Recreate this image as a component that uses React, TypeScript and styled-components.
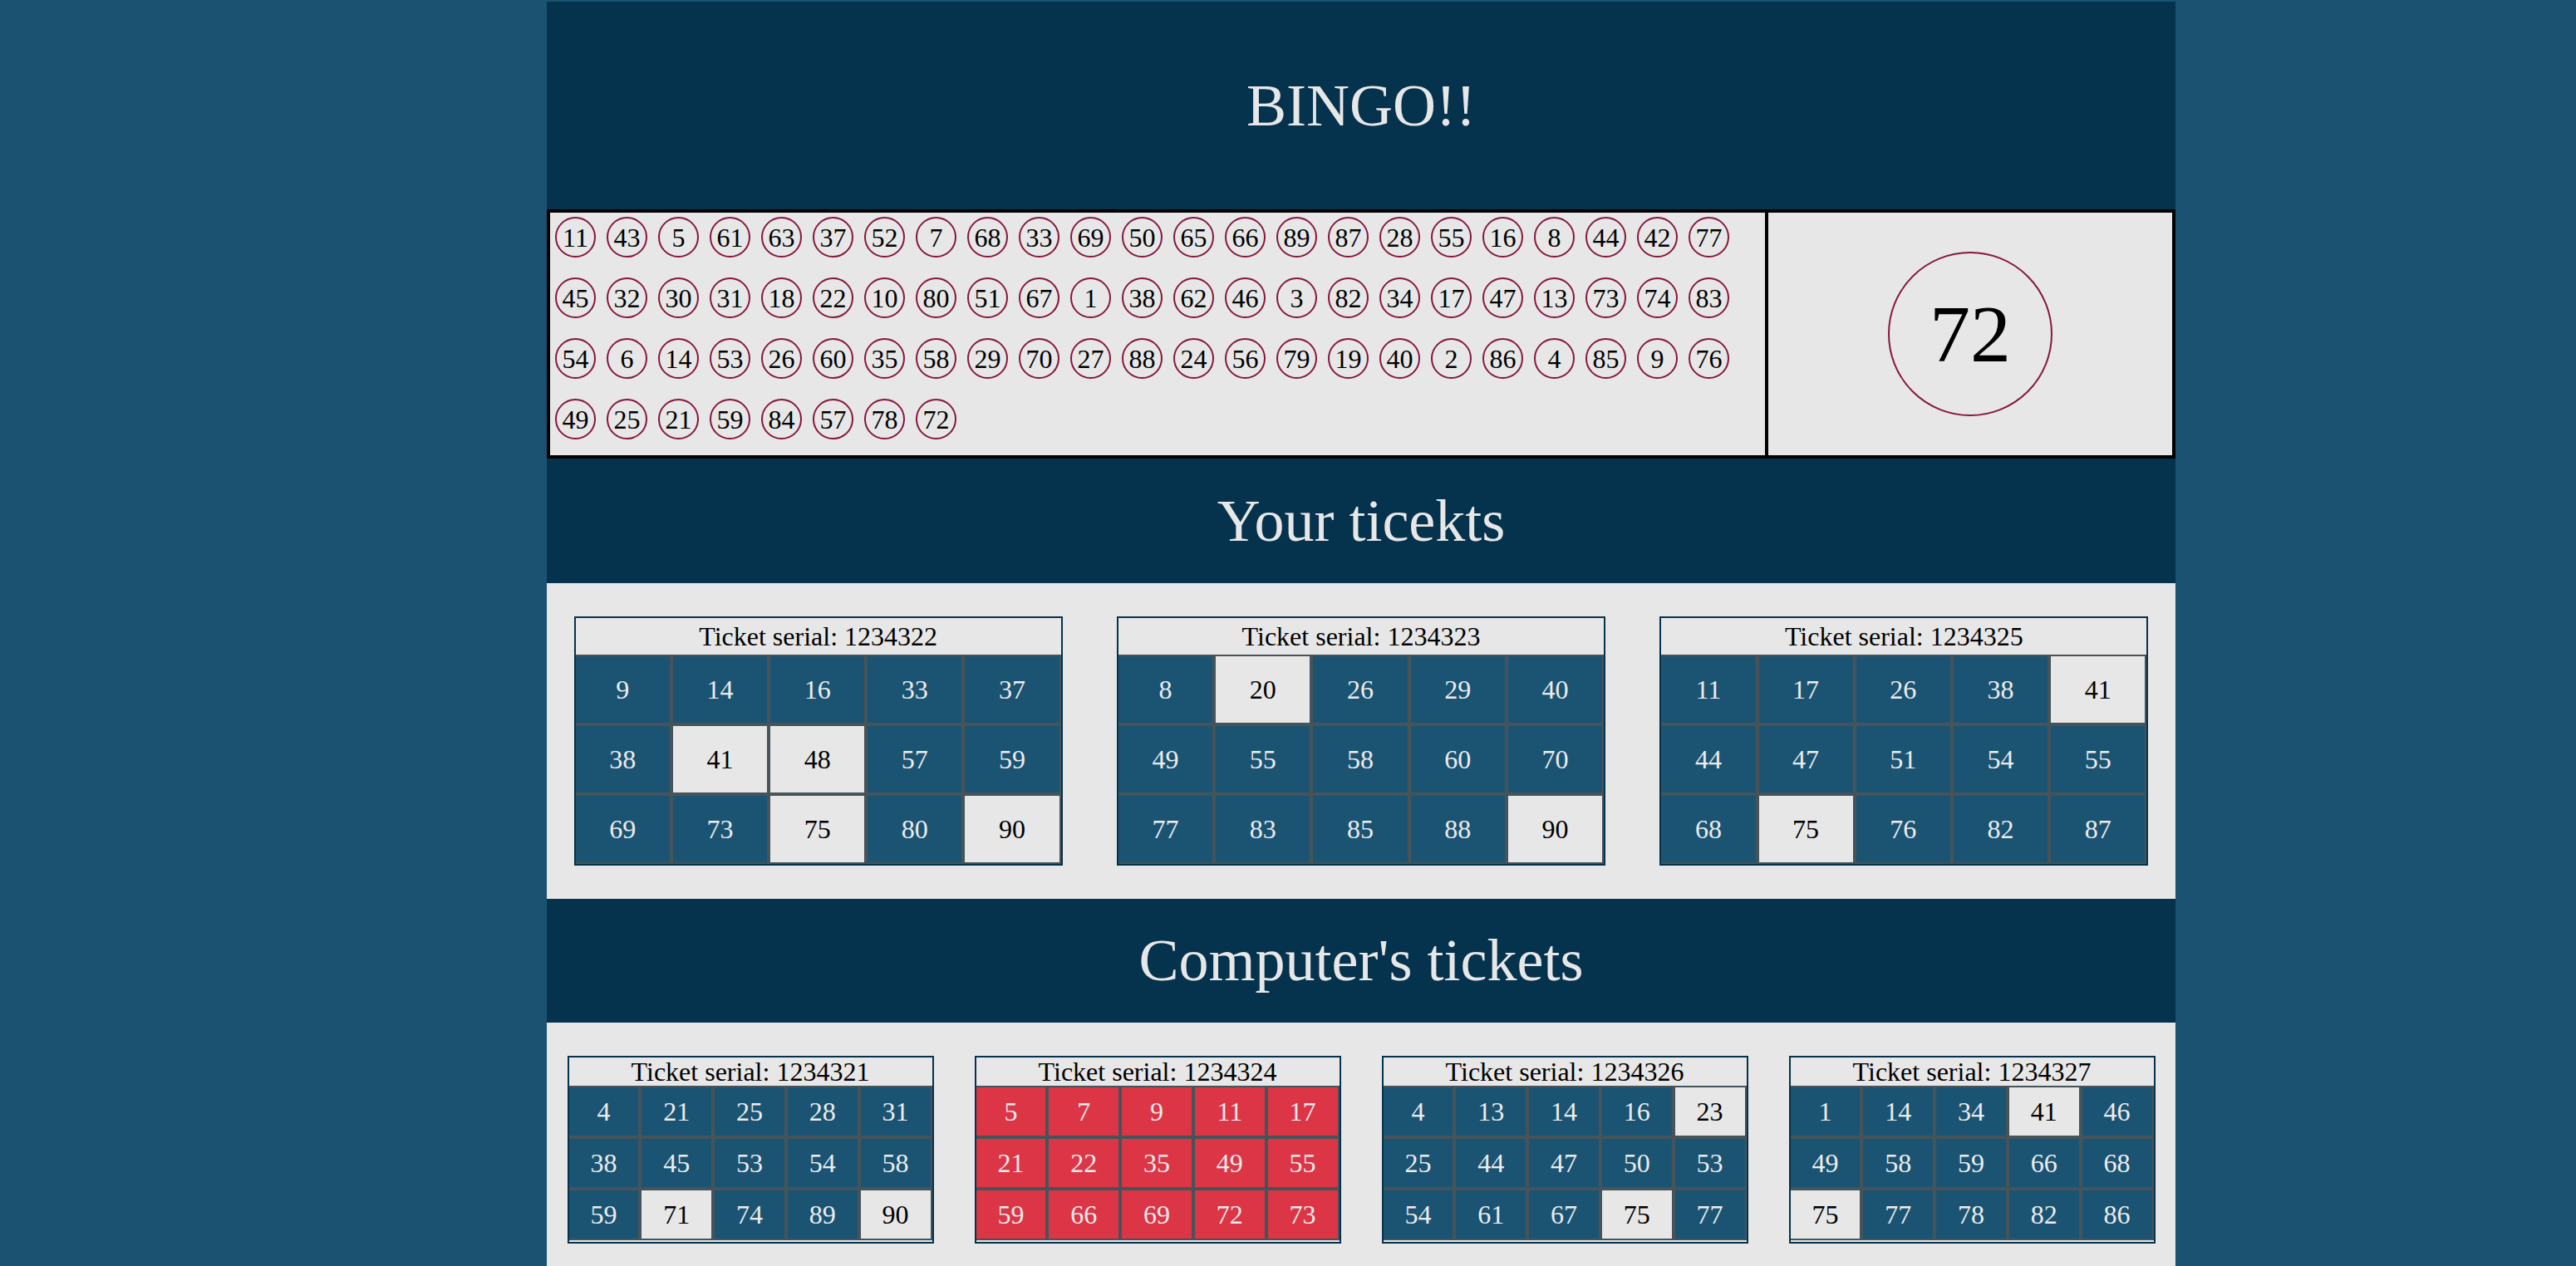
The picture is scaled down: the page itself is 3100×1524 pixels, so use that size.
import React from "react";
import styled, { createGlobalStyle } from "styled-components";

const GlobalStyle = createGlobalStyle`
  html, body {
    margin: 0;
    padding: 0;
    background: #1b5271;
    font-family: "Liberation Serif", "Times New Roman", serif;
  }
  * { box-sizing: border-box; }
`;

const Page = styled.div`
  width: 1960px;
  margin: 2px 0 0 658px;
  background: #e7e7e7;
`;

const Band = styled.header<{ $h: number }>`
  height: ${(p) => p.$h}px;
  background: #05324c;
  color: #e7e7e7;
  display: flex;
  align-items: center;
  justify-content: center;
  font-size: 72px;
  font-weight: normal;
  margin: 0;
`;

const Board = styled.section`
  display: flex;
  height: 300px;
  background: #05324c;
`;

const CalledBox = styled.div`
  width: 75%;
  border: 4px solid #000;
  background: #e7e7e7;
  display: flex;
  flex-wrap: wrap;
  align-content: flex-start;
  padding: 5px 6px;
  gap: 24px 13px;
`;

const CurrentBox = styled.div`
  width: 25%;
  border: 4px solid #000;
  border-left: none;
  background: #e7e7e7;
  display: flex;
  align-items: center;
  justify-content: center;
`;

const Ball = styled.span`
  width: 49px;
  height: 49px;
  border: 2px solid #86183d;
  border-radius: 50%;
  display: flex;
  align-items: center;
  justify-content: center;
  font-size: 32px;
  color: #000;
  line-height: 1;
`;

const BigBall = styled.div`
  width: 198px;
  height: 198px;
  border: 2px solid #86183d;
  border-radius: 50%;
  display: flex;
  align-items: center;
  justify-content: center;
  font-size: 98px;
  color: #000;
  line-height: 1;
`;

const TicketRow = styled.section`
  display: flex;
  justify-content: space-around;
  align-items: flex-start;
  padding: 40px 0 40px;
  background: #e7e7e7;
`;

const Ticket = styled.div<{ $w: string }>`
  width: ${(p) => p.$w};
  border: 2px solid #05324c;
  background: #e7e7e7;
`;

const TicketHead = styled.div<{ $h: number }>`
  height: ${(p) => p.$h}px;
  display: flex;
  align-items: center;
  justify-content: center;
  font-size: 32px;
  color: #000;
`;

const Grid = styled.div<{ $compact: boolean }>`
  display: grid;
  grid-template-columns: repeat(5, 1fr);
  gap: 4px;
  background: #465459;
  padding: 2px 2px 2px 0;
  margin-bottom: ${(p) => (p.$compact ? 2 : 0)}px;
`;

type CellState = "called" | "open" | "win";

const Cell = styled.div<{ $h: number; $state: CellState }>`
  height: ${(p) => p.$h}px;
  display: flex;
  align-items: center;
  justify-content: center;
  font-size: 32px;
  background: ${(p) =>
    p.$state === "win" ? "#dc3545" : p.$state === "called" ? "#1b5473" : "#e7e7e7"};
  color: ${(p) => (p.$state === "open" ? "#000" : "#ececec")};
`;

const called = [
  11, 43, 5, 61, 63, 37, 52, 7, 68, 33, 69, 50, 65, 66, 89, 87, 28, 55, 16, 8, 44, 42, 77,
  45, 32, 30, 31, 18, 22, 10, 80, 51, 67, 1, 38, 62, 46, 3, 82, 34, 17, 47, 13, 73, 74, 83,
  54, 6, 14, 53, 26, 60, 35, 58, 29, 70, 27, 88, 24, 56, 79, 19, 40, 2, 86, 4, 85, 9, 76,
  49, 25, 21, 59, 84, 57, 78, 72,
];
const calledSet = new Set(called);

type TicketData = { serial: number; nums: number[] };

const yours: TicketData[] = [
  { serial: 1234322, nums: [9, 14, 16, 33, 37, 38, 41, 48, 57, 59, 69, 73, 75, 80, 90] },
  { serial: 1234323, nums: [8, 20, 26, 29, 40, 49, 55, 58, 60, 70, 77, 83, 85, 88, 90] },
  { serial: 1234325, nums: [11, 17, 26, 38, 41, 44, 47, 51, 54, 55, 68, 75, 76, 82, 87] },
];

const computers: TicketData[] = [
  { serial: 1234321, nums: [4, 21, 25, 28, 31, 38, 45, 53, 54, 58, 59, 71, 74, 89, 90] },
  { serial: 1234324, nums: [5, 7, 9, 11, 17, 21, 22, 35, 49, 55, 59, 66, 69, 72, 73] },
  { serial: 1234326, nums: [4, 13, 14, 16, 23, 25, 44, 47, 50, 53, 54, 61, 67, 75, 77] },
  { serial: 1234327, nums: [1, 14, 34, 41, 46, 49, 58, 59, 66, 68, 75, 77, 78, 82, 86] },
];

function TicketCard({ t, compact }: { t: TicketData; compact: boolean }) {
  const won = t.nums.every((n) => calledSet.has(n));
  return (
    <Ticket $w={compact ? "22.5%" : "30%"}>
      <TicketHead $h={compact ? 34 : 44}>Ticket serial: {t.serial}</TicketHead>
      <Grid $compact={compact}>
        {t.nums.map((n, i) => (
          <Cell
            key={i}
            $h={compact ? 58 : 80}
            $state={won ? "win" : calledSet.has(n) ? "called" : "open"}
          >
            {n}
          </Cell>
        ))}
      </Grid>
    </Ticket>
  );
}

export default function App() {
  return (
    <>
      <GlobalStyle />
      <Page>
        <Band $h={250}>BINGO!!</Band>
        <Board>
          <CalledBox>
            {called.map((n) => (
              <Ball key={n}>{n}</Ball>
            ))}
          </CalledBox>
          <CurrentBox>
            <BigBall>{called[called.length - 1]}</BigBall>
          </CurrentBox>
        </Board>
        <Band $h={150}>Your ticekts</Band>
        <TicketRow>
          {yours.map((t) => (
            <TicketCard key={t.serial} t={t} compact={false} />
          ))}
        </TicketRow>
        <Band $h={149}>Computer's tickets</Band>
        <TicketRow>
          {computers.map((t) => (
            <TicketCard key={t.serial} t={t} compact={true} />
          ))}
        </TicketRow>
      </Page>
    </>
  );
}
